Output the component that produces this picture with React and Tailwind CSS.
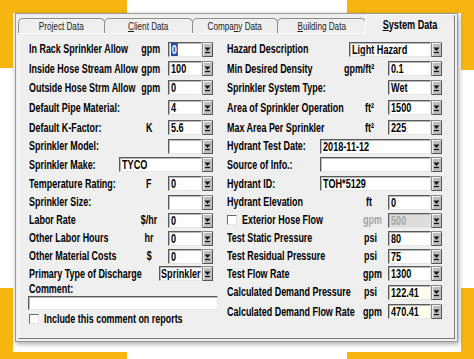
import React from "react";

const FONT = {
  fontFamily: '"Liberation Sans", Arial, sans-serif',
};

function Btn() {
  return (
    <svg width="11" height="15" viewBox="0 0 11 15" className="block flex-none">
      <rect x="0" y="0" width="11" height="15" fill="#bdbdbd" />
      <path d="M1 1.5H10M1.5 1V14" stroke="#f2f2f2" />
      <path d="M0 14.5H11M10.5 0V15" stroke="#555555" />
      <path d="M0.5 0V15M0 0.5H11" stroke="#8a8a8a" />
      <path d="M2.5 5.5H8.5L5.5 9Z" fill="#111" />
      <path d="M3 10.5H8" stroke="#111" strokeWidth="1.2" />
    </svg>
  );
}

function Combo({ w, children, bg = "bg-white", color = "text-black", pad = "pl-[2px]" }) {
  return (
    <div className="flex h-[15px] flex-none">
      <div
        className={`${w} ${bg} ${color} ${pad} h-[15px] border border-t-[#5a5a5a] border-l-[#5a5a5a] border-r-[#e6e6e6] border-b-[#e6e6e6] shadow-[inset_1px_1px_0_#b8b8b8] flex items-center pt-[1px] text-[12px] font-bold leading-none whitespace-nowrap overflow-hidden`}
      >
        <span className="inline-block origin-left scale-x-[0.76] whitespace-nowrap">
          {children}
        </span>
      </div>
      <Btn />
    </div>
  );
}

function Label({ w, children, className = "", center = false }) {
  return (
    <div
      className={`${w} flex-none text-[12px] font-bold leading-none whitespace-nowrap ${center ? "text-center" : ""} ${className}`}
    >
      <span
        className={`inline-block whitespace-nowrap scale-x-[0.745] ${center ? "origin-center" : "origin-left"}`}
      >
        {children}
      </span>
    </div>
  );
}

function Check() {
  return (
    <div className="w-[10px] h-[10px] flex-none bg-white border border-t-[#6a6a6a] border-l-[#6a6a6a] border-r-[#e6e6e6] border-b-[#e6e6e6]" />
  );
}

function Tab({ w, children, selected }) {
  if (selected) {
    return (
      <div
        className={`${w} h-[20px] -mb-[1px] -ml-[1px] relative z-10 bg-[#efefef] border-t border-l border-r border-t-[#ffffff] border-l-[#ffffff] border-r-[#7c7c7c] rounded-t-[4px] flex items-center justify-center text-[12px] font-bold text-black leading-none`}
      >
        <span className="inline-block origin-center scale-x-[0.76] whitespace-nowrap">
          {children}
        </span>
      </div>
    );
  }
  return (
    <div
      className={`${w} h-[15px] -ml-[1px] first:ml-0 border-t border-l border-r border-[#8c8c8c] rounded-t-[5px] flex items-center justify-center text-[11px] text-[#222] leading-none`}
    >
      <span className="inline-block origin-center scale-x-[0.74] whitespace-nowrap">
        {children}
      </span>
    </div>
  );
}

function LeftCol() {
  return (
    <div className="w-[198px] flex-none flex flex-col">
      <div className="flex items-center h-[20px]">
        <Label w="w-[109px]">In Rack Sprinkler Allow</Label>
        <Label w="w-[22px]" center>gpm</Label>
        <div className="w-[8px]" />
        <Combo w="w-[34px]">
          <span className="bg-[#2a4aa8] text-white px-[1px] py-[1px]">0</span>
        </Combo>
      </div>
      <div className="flex items-center h-[19px]">
        <Label w="w-[109px]">Inside Hose Stream Allow</Label>
        <Label w="w-[22px]" center>gpm</Label>
        <div className="w-[8px]" />
        <Combo w="w-[34px]">100</Combo>
      </div>
      <div className="flex items-center h-[19px]">
        <Label w="w-[109px]">Outside Hose Strm Allow</Label>
        <Label w="w-[22px]" center>gpm</Label>
        <div className="w-[8px]" />
        <Combo w="w-[34px]">0</Combo>
      </div>
      <div className="flex items-center h-[21px]">
        <Label w="w-[139px]">Default Pipe Material:</Label>
        <Combo w="w-[34px]">4</Combo>
      </div>
      <div className="flex items-center h-[19px]">
        <Label w="w-[109px]">Default K-Factor:</Label>
        <Label w="w-[22px]" center>K</Label>
        <div className="w-[8px]" />
        <Combo w="w-[34px]">5.6</Combo>
      </div>
      <div className="flex items-center h-[18px]">
        <Label w="w-[139px]">Sprinkler Model:</Label>
        <Combo w="w-[34px]"></Combo>
      </div>
      <div className="flex items-center h-[19px]">
        <Label w="w-[90px]">Sprinkler Make:</Label>
        <Combo w="w-[83px]">TYCO</Combo>
      </div>
      <div className="flex items-center h-[19px]">
        <Label w="w-[109px]">Temperature Rating:</Label>
        <Label w="w-[22px]" center>F</Label>
        <div className="w-[8px]" />
        <Combo w="w-[34px]">0</Combo>
      </div>
      <div className="flex items-center h-[18px]">
        <Label w="w-[139px]">Sprinkler Size:</Label>
        <Combo w="w-[34px]"></Combo>
      </div>
      <div className="flex items-center h-[18px]">
        <Label w="w-[109px]">Labor Rate</Label>
        <Label w="w-[22px]" center>$/hr</Label>
        <div className="w-[8px]" />
        <Combo w="w-[34px]">0</Combo>
      </div>
      <div className="flex items-center h-[18px]">
        <Label w="w-[109px]">Other Labor Hours</Label>
        <Label w="w-[22px]" center>hr</Label>
        <div className="w-[8px]" />
        <Combo w="w-[34px]">0</Combo>
      </div>
      <div className="flex items-center h-[18px]">
        <Label w="w-[109px]">Other Material Costs</Label>
        <Label w="w-[22px]" center>$</Label>
        <div className="w-[8px]" />
        <Combo w="w-[34px]">0</Combo>
      </div>
      <div className="flex items-center h-[17px]">
        <Label w="w-[130px]">Primary Type of Discharge</Label>
        <Combo w="w-[43px]" pad="pl-[1px]">Sprinkler</Combo>
      </div>
      <div className="flex items-center h-[14px]">
        <Label w="w-[120px]">Comment:</Label>
      </div>
      <div className="h-[14px] -ml-[1px] w-[190px] bg-white border border-t-[#5a5a5a] border-l-[#5a5a5a] border-r-[#e6e6e6] border-b-[#e6e6e6] shadow-[inset_1px_1px_0_#b8b8b8]" />
      <div className="flex items-center h-[18px] gap-[5px]">
        <Check />
        <Label w="w-[170px]">Include this comment on reports</Label>
      </div>
    </div>
  );
}

function RightCol() {
  return (
    <div className="w-[215px] flex-none flex flex-col">
      <div className="flex items-center h-[20px]">
        <Label w="w-[122px]">Hazard Description</Label>
        <Combo w="w-[82px]">Light Hazard</Combo>
      </div>
      <div className="flex items-center h-[19px]">
        <Label w="w-[113px]">Min Desired Density</Label>
        <Label w="w-[48px]" className="pl-[4px]">gpm/ft²</Label>
        <Combo w="w-[43px]">0.1</Combo>
      </div>
      <div className="flex items-center h-[19px]">
        <Label w="w-[161px]">Sprinkler System Type:</Label>
        <Combo w="w-[43px]">Wet</Combo>
      </div>
      <div className="flex items-center h-[21px]">
        <Label w="w-[113px]">Area of Sprinkler Operation</Label>
        <Label w="w-[48px]" className="pl-[25px]">ft²</Label>
        <Combo w="w-[43px]">1500</Combo>
      </div>
      <div className="flex items-center h-[19px]">
        <Label w="w-[113px]">Max Area Per Sprinkler</Label>
        <Label w="w-[48px]" className="pl-[25px]">ft²</Label>
        <Combo w="w-[43px]">225</Combo>
      </div>
      <div className="flex items-center h-[18px]">
        <Label w="w-[93px]">Hydrant Test Date:</Label>
        <Combo w="w-[111px]">2018-11-12</Combo>
      </div>
      <div className="flex items-center h-[19px]">
        <Label w="w-[93px]">Source of Info.:</Label>
        <Combo w="w-[111px]"></Combo>
      </div>
      <div className="flex items-center h-[19px]">
        <Label w="w-[93px]">Hydrant ID:</Label>
        <Combo w="w-[111px]">TOH*5129</Combo>
      </div>
      <div className="flex items-center h-[18px]">
        <Label w="w-[113px]">Hydrant Elevation</Label>
        <Label w="w-[48px]" className="pl-[26px]">ft</Label>
        <Combo w="w-[43px]">0</Combo>
      </div>
      <div className="flex items-center h-[18px]">
        <Check />
        <Label w="w-[103px]" className="pl-[5px]">Exterior Hose Flow</Label>
        <Label w="w-[48px]" className="pl-[23px] text-[#a3a3a3]">gpm</Label>
        <Combo w="w-[43px]" bg="bg-[#dcdcdc]" color="text-[#a6a6a6]">500</Combo>
      </div>
      <div className="flex items-center h-[18px]">
        <Label w="w-[113px]">Test Static Pressure</Label>
        <Label w="w-[48px]" className="pl-[24px]">psi</Label>
        <Combo w="w-[43px]">80</Combo>
      </div>
      <div className="flex items-center h-[18px]">
        <Label w="w-[113px]">Test Residual Pressure</Label>
        <Label w="w-[48px]" className="pl-[24px]">psi</Label>
        <Combo w="w-[43px]">75</Combo>
      </div>
      <div className="flex items-center h-[17px]">
        <Label w="w-[113px]">Test Flow Rate</Label>
        <Label w="w-[48px]" className="pl-[23px]">gpm</Label>
        <Combo w="w-[43px]">1300</Combo>
      </div>
      <div className="flex items-center h-[20px]">
        <Label w="w-[113px]">Calculated Demand Pressure</Label>
        <Label w="w-[48px]" className="pl-[24px]">psi</Label>
        <Combo w="w-[43px]" bg="bg-[#ffffee]">122.41</Combo>
      </div>
      <div className="flex items-center h-[19px]">
        <Label w="w-[113px]">Calculated Demand Flow Rate</Label>
        <Label w="w-[48px]" className="pl-[23px]">gpm</Label>
        <Combo w="w-[43px]" bg="bg-[#ffffee]">470.41</Combo>
      </div>
    </div>
  );
}

export default function App() {
  return (
    <div className="relative w-[474px] h-[359px] bg-white overflow-hidden text-black" style={FONT}>
      {/* yellow corner brackets behind the dialog */}
      <div className="absolute left-0 top-0 w-[127px] h-[13px] bg-[#f6b60f]" />
      <div className="absolute left-0 top-0 w-[13px] h-[68px] bg-[#f6b60f]" />
      <div className="absolute right-0 top-0 w-[127px] h-[13px] bg-[#f6b60f]" />
      <div className="absolute right-0 top-0 w-[13px] h-[70px] bg-[#f6b60f]" />
      <div className="absolute left-0 bottom-0 w-[127px] h-[7px] bg-[#f6b60f]" />
      <div className="absolute left-0 bottom-0 w-[13px] h-[71px] bg-[#f6b60f]" />
      <div className="absolute right-0 bottom-0 w-[127px] h-[7px] bg-[#f6b60f]" />
      <div className="absolute right-0 bottom-0 w-[13px] h-[71px] bg-[#f6b60f]" />

      <div className="relative ml-[15px] mt-[13px] w-[443px] border border-[#9a9a9a] bg-[#efefef] px-[2px] pb-[2px] shadow-[1px_2px_5px_rgba(0,0,0,0.35)]">
        <div className="flex items-end h-[19px]">
          <Tab w="w-[87px]">
            Pro<u className="underline-offset-1">j</u>ect Data
          </Tab>
          <Tab w="w-[89px]">
            <u className="underline-offset-1">C</u>lient Data
          </Tab>
          <Tab w="w-[86px]">
            Compa<u className="underline-offset-1">n</u>y Data
          </Tab>
          <Tab w="w-[89px]">
            <u className="underline-offset-1">B</u>uilding Data
          </Tab>
          <Tab w="w-[90px]" selected>
            <u className="underline-offset-1">S</u>ystem Data
          </Tab>
        </div>
        <div className="h-[306px] border border-t-[#ffffff] border-l-[#ffffff] border-r-[#7c7c7c] border-b-[#7c7c7c] pl-[10px] pt-[5px] flex">
          <LeftCol />
          <RightCol />
        </div>
      </div>
    </div>
  );
}
